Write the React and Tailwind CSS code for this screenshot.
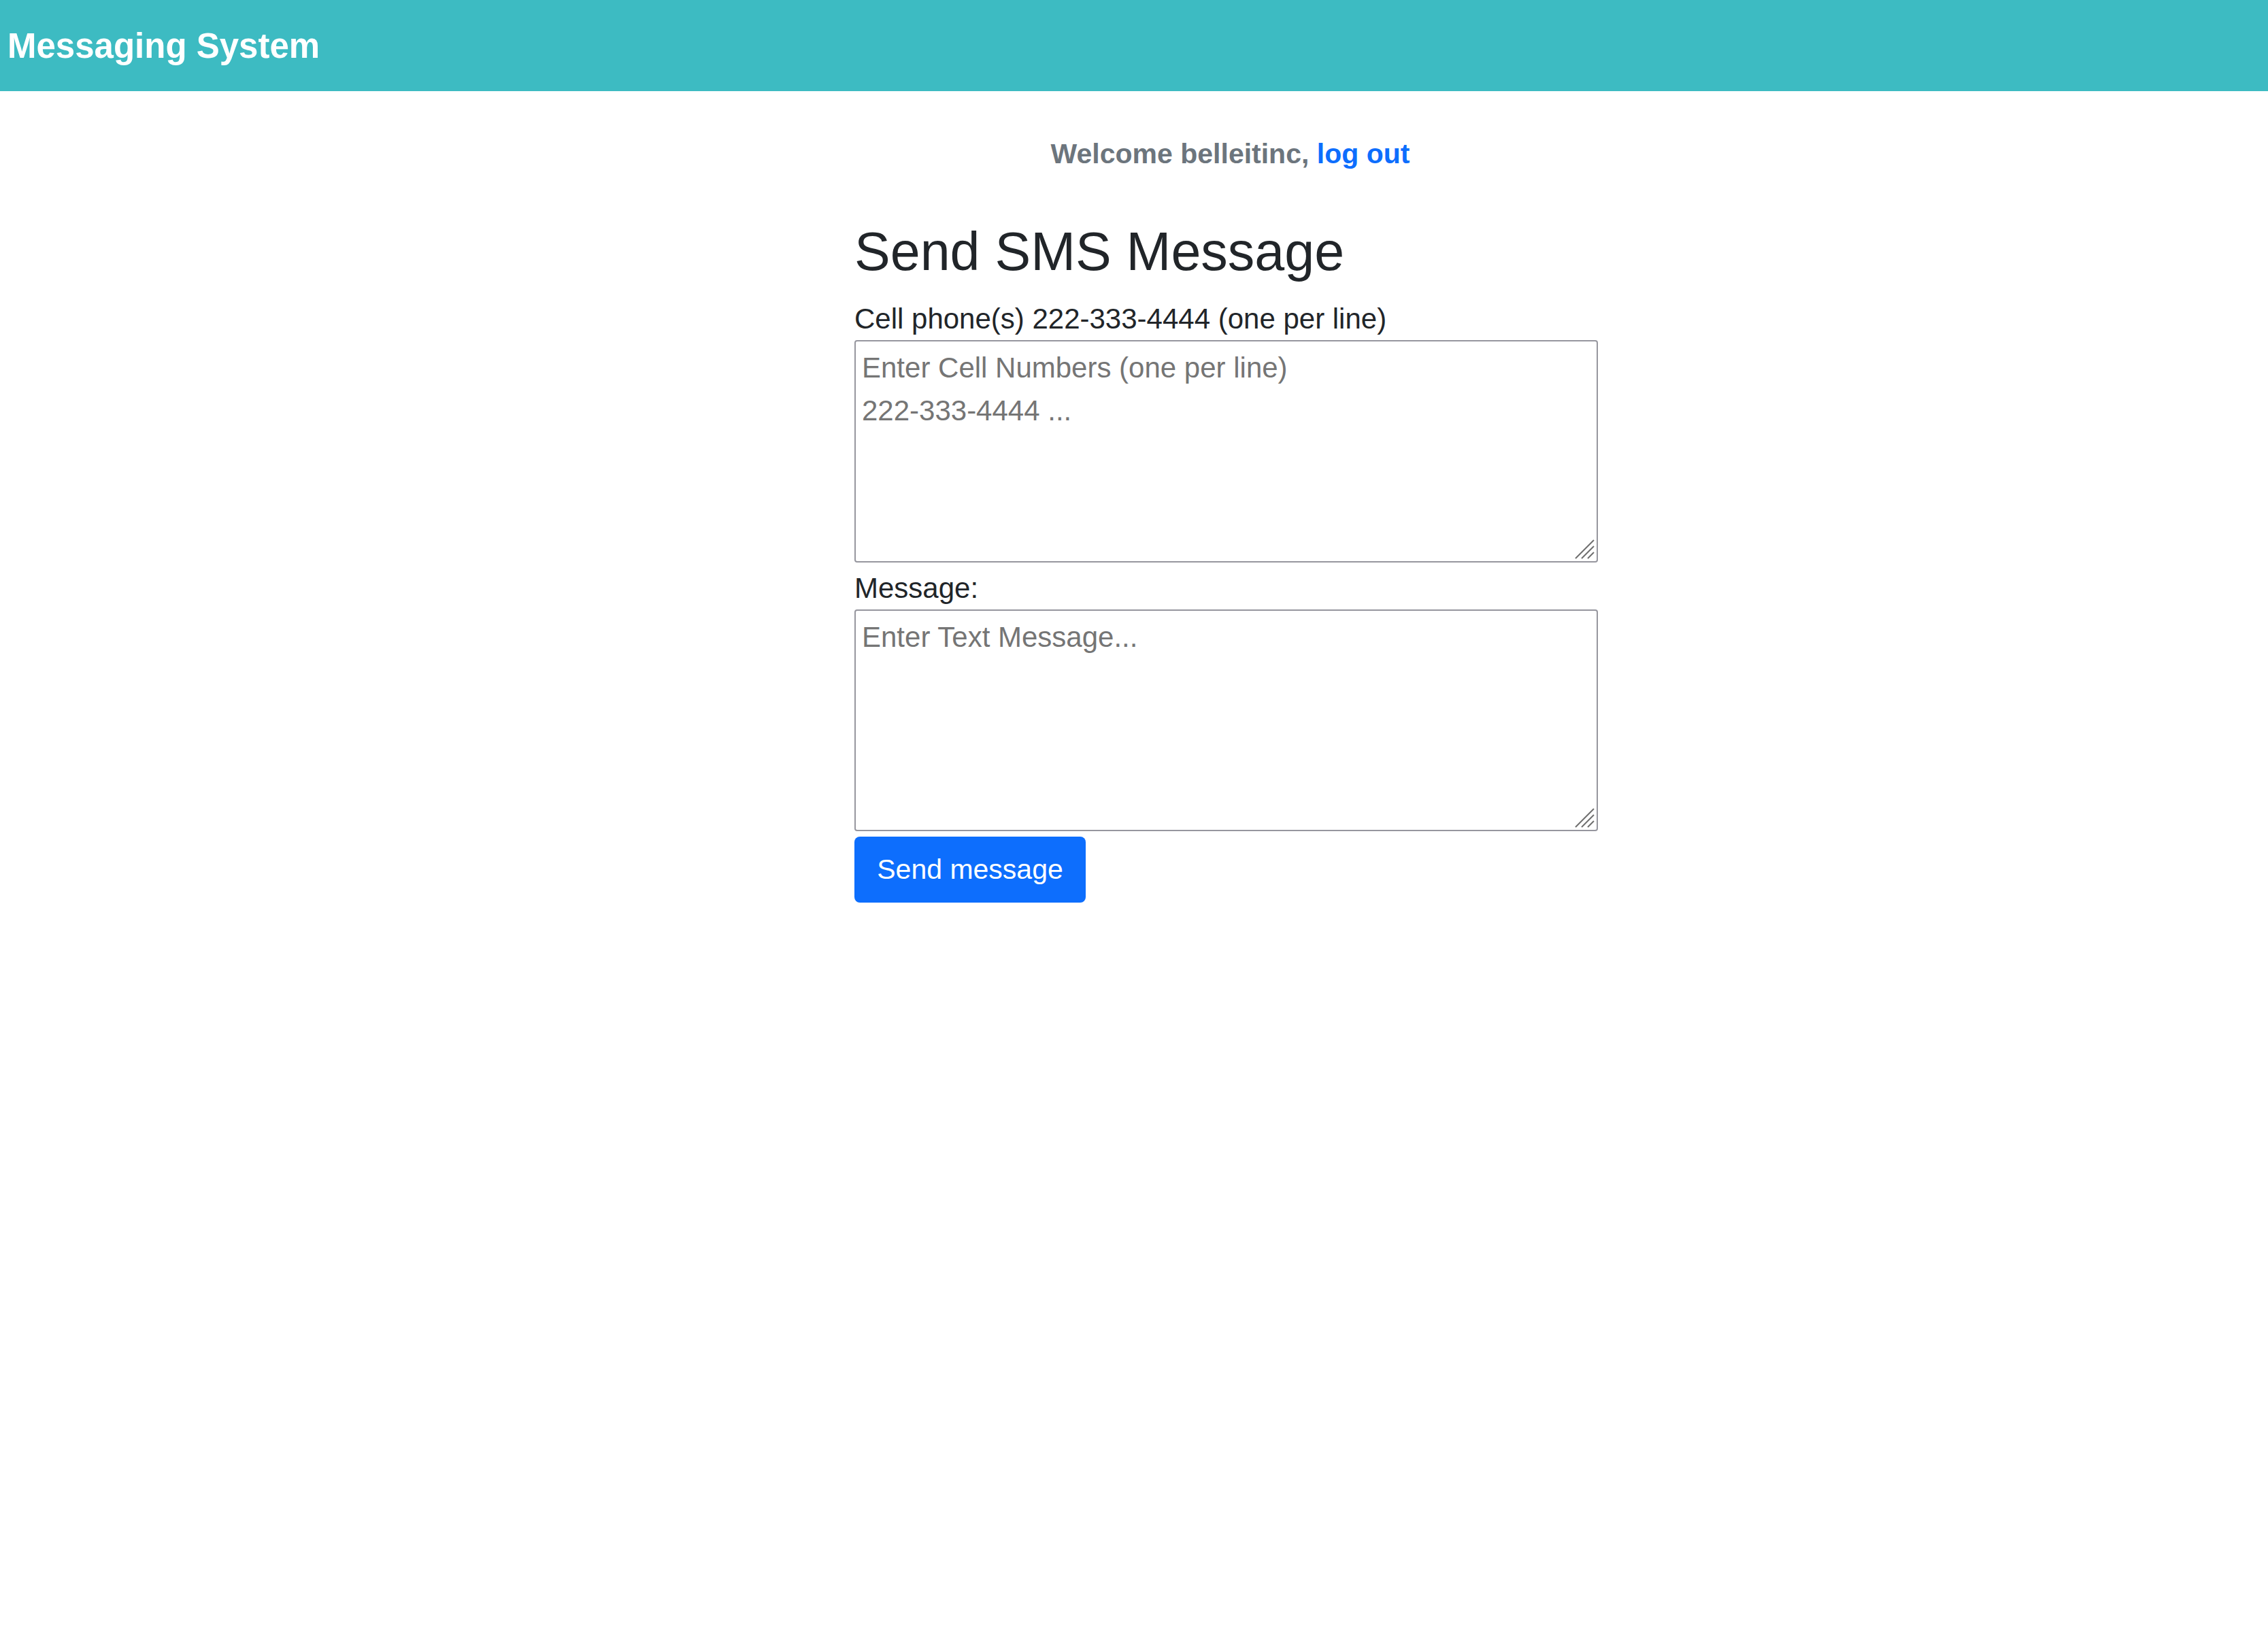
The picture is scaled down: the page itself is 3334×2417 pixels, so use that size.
import React from 'react';

function ResizeGrip() {
  return (
    <svg className="pointer-events-none absolute bottom-[5px] right-[5px]" width="32" height="32" viewBox="0 0 32 32">
      <path d="M31 4L4 31M31 13L13 31M31 22L22 31" stroke="#6f6f6f" strokeWidth="2" fill="none" />
    </svg>
  );
}

export default function App() {
  return (
    <div className="min-h-screen bg-white font-['Liberation_Sans',Arial,sans-serif]">
      <header className="flex h-[134px] items-center bg-[#3dbbc2] px-[11px]">
        <span className="text-[51px] font-bold leading-none text-white">Messaging System</span>
      </header>

      <main className="ml-[1256px] w-[1093px]">
        <p className="mt-[68px] pl-[12px] text-center text-[41px] font-bold leading-[1.2] text-[#6c757d]">
          Welcome belleitinc, <a href="#" className="text-[#0d6efd]">log out</a>
        </p>

        <h2 className="mt-[72px] text-[79px] font-medium leading-[1.2] text-[#212529]">Send SMS Message</h2>

        <form className="mt-[19px] text-[42px] leading-[1.5] text-[#212529]">
          <label className="block">Cell phone(s) 222-333-4444 (one per line)</label>
          <div className="relative">
            <textarea
              className="block h-[327px] w-full resize-none rounded-[4px] border-2 border-[#96969e] px-[9px] py-[7px] text-[42px] leading-[1.5] placeholder:text-[#757575]"
              placeholder={'Enter Cell Numbers (one per line)\n222-333-4444 ...'}
            />
            <ResizeGrip />
          </div>
          <label className="mt-[6px] block">Message:</label>
          <div className="relative">
            <textarea
              className="block h-[326px] w-full resize-none rounded-[4px] border-2 border-[#96969e] px-[9px] py-[7px] text-[42px] leading-[1.5] placeholder:text-[#757575]"
              placeholder="Enter Text Message..."
            />
            <ResizeGrip />
          </div>
          <button
            type="button"
            className="mt-[8px] h-[97px] w-[340px] rounded-[8px] bg-[#0d6efd] text-[41px] text-white"
          >
            Send message
          </button>
        </form>
      </main>
    </div>
  );
}
